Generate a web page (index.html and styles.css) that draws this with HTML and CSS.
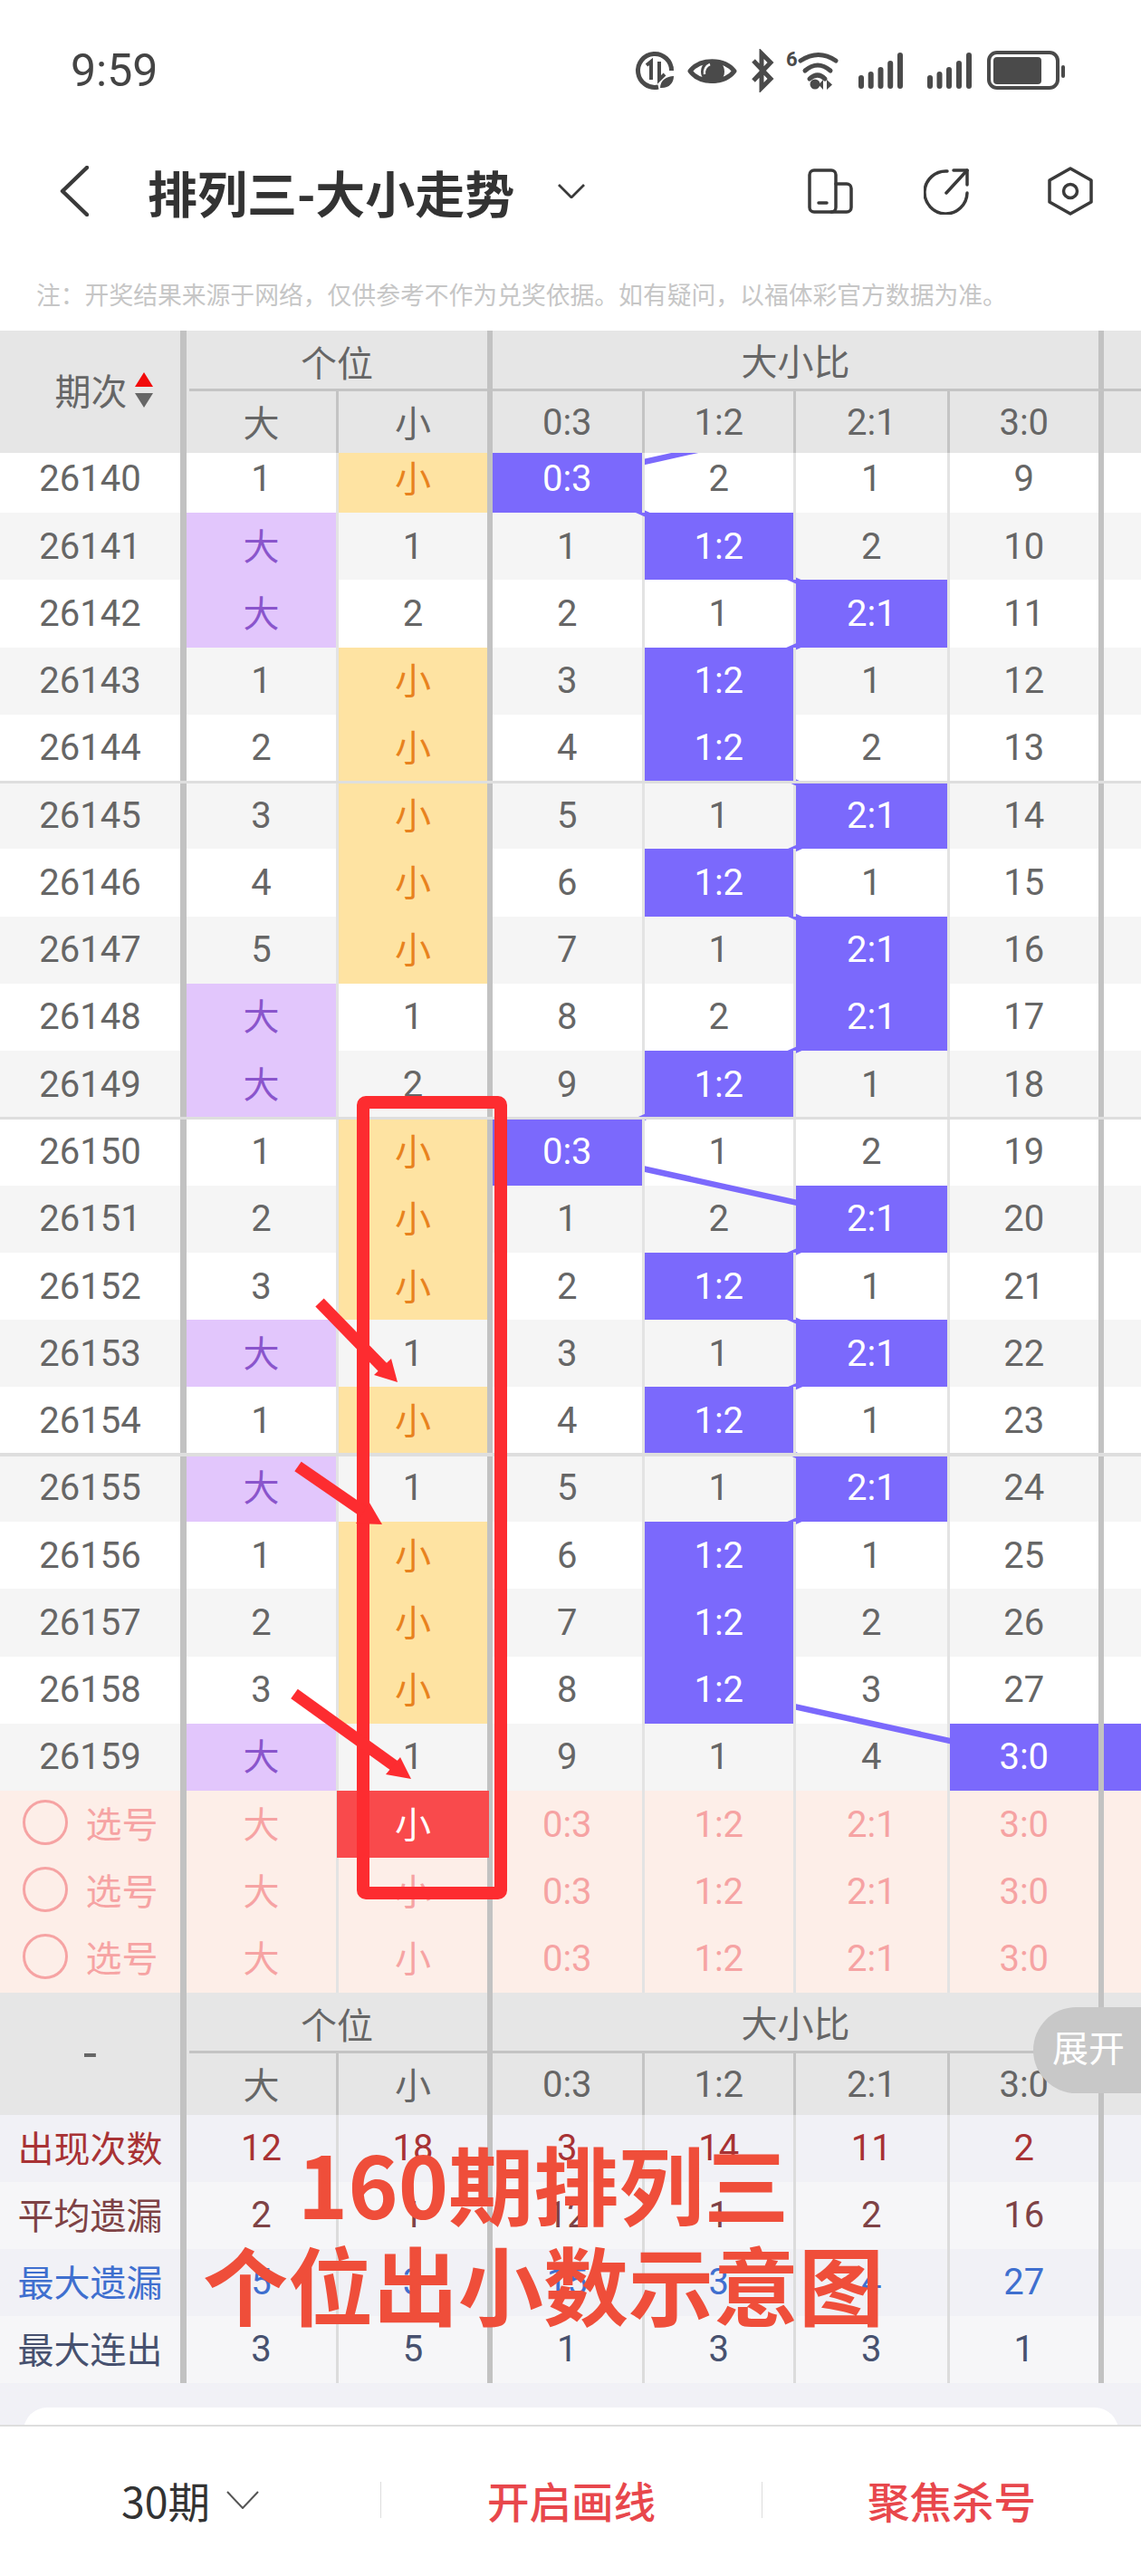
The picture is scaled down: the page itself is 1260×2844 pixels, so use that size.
FILE: index.html
```html
<!DOCTYPE html>
<html lang="zh-CN">
<head>
    <meta charset="utf-8">
    <title>排列三-大小走势</title>
    <link rel="stylesheet" href="styles.css">
</head>
<body>
<div class="page">

    <!-- status bar -->
    <div class="status">
        <span class="status-time">9:59</span>
        <svg class="status-icons" width="480" height="48" viewBox="700 54 480 48">
            <g fill="none" stroke="#4a4a4a" stroke-width="5">
                <path d="M741.5 78A18.5 18.5 0 1 0 727 96"/>
                <path stroke-width="4" d="M714 72l5-4v20M728 68v20l6-6"/>
                <path d="M762 78.5C773 64 800 64 811 78.5C800 93 773 93 762 78.5Z" stroke-linejoin="round"/>
                <path d="M832 67L851 87L841 97V59L851 69L832 89"/>
                <g stroke-linecap="round">
                    <path d="M884 67Q904 54 923 67"/>
                    <path d="M889 78Q903 66 917 78"/>
                    <path d="M894 87Q903 79 911 87"/>
                </g>
                <g stroke-width="6" stroke-linecap="round">
                    <path d="M951 95v-9M961.7 95v-13M972.5 95v-18M983.2 95v-25M994 95v-34"/>
                    <path d="M1027 95v-9M1037.5 95v-13M1048 95v-18M1059 95v-25M1070 95v-34"/>
                </g>
                <rect x="1092" y="58" width="76" height="39" rx="9" stroke-width="4"/>
            </g>
            <g fill="#4a4a4a">
                <path d="M729 97C729 89 736 84 744 84C744 92 738 98 729 97Z"/>
                <circle cx="787" cy="79" r="13"/>
                <circle cx="900" cy="93" r="5.5"/>
                <path d="M909 88v11l-5-5.500zM913 88v11l6-5.500z"/>
                <rect x="1097" y="63" width="53" height="30" rx="4"/>
                <rect x="1172" y="72" width="4" height="14" rx="2"/>
                <text class="status-six" x="868" y="73">6</text>
            </g>
            <path d="M778 82a10 10 0 0 1 6-11" fill="none" stroke="#fff" stroke-width="2.500"/>
        </svg>
    </div>

    <!-- nav -->
    <div class="nav">
        <svg class="nav-back" width="32" height="56" viewBox="0 0 32 56">
            <path d="M30 2L3 28L30 54" fill="none" stroke="#3a3a3a" stroke-width="4.500" stroke-linecap="round" stroke-linejoin="round"/>
        </svg>
        <span class="nav-title">排列三-大小走势</span>
        <svg class="nav-down" width="30" height="16" viewBox="0 0 30 16">
            <path d="M1 1L15 15L29 1" fill="none" stroke="#3a3a3a" stroke-width="2.800"/>
        </svg>
        <div class="nav-actions">
            <svg width="50" height="50" viewBox="0 0 50 50">
                <g fill="none" stroke="#3a3a3a" stroke-width="3.500" stroke-linejoin="round" stroke-linecap="round">
                    <rect x="2" y="2" width="29" height="46" rx="5"/>
                    <path d="M31 17h12a5 5 0 0 1 5 5v21a5 5 0 0 1-5 5H26"/>
                    <path d="M12 38h9"/>
                </g>
            </svg>
            <svg class="nav-share" width="50" height="52" viewBox="0 0 50 52">
                <g fill="none" stroke="#3a3a3a" stroke-width="3.500" stroke-linecap="round" stroke-linejoin="round">
                    <path d="M26 4A23.500 23.500 0 1 0 48 28"/>
                    <path d="M25 28L48 3"/>
                    <path d="M33 3h15v16"/>
                </g>
            </svg>
            <svg class="nav-hex" width="50" height="54" viewBox="0 0 50 54">
                <g fill="none" stroke="#3a3a3a" stroke-width="3.500" stroke-linejoin="round">
                    <path d="M25 2L48 15V39L25 52L2 39V15Z"/>
                    <circle cx="25" cy="27" r="7.500"/>
                </g>
            </svg>
        </div>
    </div>

    <p class="note">注：开奖结果来源于网络，仅供参考不作为兑奖依据。如有疑问，以福体彩官方数据为准。</p>

    <!-- table head -->
    <div class="thead">
        <div class="th-no th-sorted">期次<span class="sort"><i class="sort-up"></i><i class="sort-down"></i></span></div>
        <div class="th-group th-ones">个位</div>
        <div class="th-group th-ratio">大小比</div>
        <div class="th-group th-rest"></div>
        <div class="th-sub th-han">大</div>
        <div class="th-sub th-thick th-han">小</div>
        <div class="th-sub">0:3</div>
        <div class="th-sub">1:2</div>
        <div class="th-sub">2:1</div>
        <div class="th-sub th-thick">3:0</div>
        <div class="th-sub th-end"></div>
    </div>

    <!-- trend rows -->
    <div class="trend">
        <svg class="trend-line" width="1260" height="1700" viewBox="0 0 1260 1700">
            <polyline fill="none" stroke="#7b69fc" stroke-width="6.500" points="961,-45.400 626,28.900 793.500,103.100 961,177.400 793.500,251.700 793.500,326 961,400.200 793.500,474.500 961,548.800 961,623 793.500,697.300 626,771.600 961,845.800 793.500,920.100 961,994.400 793.500,1068.600 961,1142.900 793.500,1217.200 793.500,1291.500 793.500,1365.700 1130.500,1440"/>
        </svg>
        <div class="trend-rows">
            <div class="row cols"><div>26140</div><div>1</div><div class="small">小</div><div class="on">0:3</div><div>2</div><div>1</div><div>9</div><div></div></div>
            <div class="row cols alt"><div>26141</div><div class="big">大</div><div>1</div><div>1</div><div class="on">1:2</div><div>2</div><div>10</div><div></div></div>
            <div class="row cols"><div>26142</div><div class="big">大</div><div>2</div><div>2</div><div>1</div><div class="on">2:1</div><div>11</div><div></div></div>
            <div class="row cols alt"><div>26143</div><div>1</div><div class="small">小</div><div>3</div><div class="on">1:2</div><div>1</div><div>12</div><div></div></div>
            <div class="row cols"><div>26144</div><div>2</div><div class="small">小</div><div>4</div><div class="on">1:2</div><div>2</div><div>13</div><div></div></div>
            <div class="row cols alt split"><div>26145</div><div>3</div><div class="small">小</div><div>5</div><div>1</div><div class="on">2:1</div><div>14</div><div></div></div>
            <div class="row cols"><div>26146</div><div>4</div><div class="small">小</div><div>6</div><div class="on">1:2</div><div>1</div><div>15</div><div></div></div>
            <div class="row cols alt"><div>26147</div><div>5</div><div class="small">小</div><div>7</div><div>1</div><div class="on">2:1</div><div>16</div><div></div></div>
            <div class="row cols"><div>26148</div><div class="big">大</div><div>1</div><div>8</div><div>2</div><div class="on">2:1</div><div>17</div><div></div></div>
            <div class="row cols alt"><div>26149</div><div class="big">大</div><div>2</div><div>9</div><div class="on">1:2</div><div>1</div><div>18</div><div></div></div>
            <div class="row cols split"><div>26150</div><div>1</div><div class="small">小</div><div class="on">0:3</div><div>1</div><div>2</div><div>19</div><div></div></div>
            <div class="row cols alt"><div>26151</div><div>2</div><div class="small">小</div><div>1</div><div>2</div><div class="on">2:1</div><div>20</div><div></div></div>
            <div class="row cols"><div>26152</div><div>3</div><div class="small">小</div><div>2</div><div class="on">1:2</div><div>1</div><div>21</div><div></div></div>
            <div class="row cols alt"><div>26153</div><div class="big">大</div><div>1</div><div>3</div><div>1</div><div class="on">2:1</div><div>22</div><div></div></div>
            <div class="row cols"><div>26154</div><div>1</div><div class="small">小</div><div>4</div><div class="on">1:2</div><div>1</div><div>23</div><div></div></div>
            <div class="row cols alt split"><div>26155</div><div class="big">大</div><div>1</div><div>5</div><div>1</div><div class="on">2:1</div><div>24</div><div></div></div>
            <div class="row cols"><div>26156</div><div>1</div><div class="small">小</div><div>6</div><div class="on">1:2</div><div>1</div><div>25</div><div></div></div>
            <div class="row cols alt"><div>26157</div><div>2</div><div class="small">小</div><div>7</div><div class="on">1:2</div><div>2</div><div>26</div><div></div></div>
            <div class="row cols"><div>26158</div><div>3</div><div class="small">小</div><div>8</div><div class="on">1:2</div><div>3</div><div>27</div><div></div></div>
            <div class="row cols alt"><div>26159</div><div class="big">大</div><div>1</div><div>9</div><div>1</div><div>4</div><div class="on">3:0</div><div class="on"></div></div>
            <div class="row cols pick"><div><span class="pick-ring"></span>选号</div><div>大</div><div class="hit">小</div><div>0:3</div><div>1:2</div><div>2:1</div><div>3:0</div><div></div></div>
            <div class="row cols pick"><div><span class="pick-ring"></span>选号</div><div>大</div><div>小</div><div>0:3</div><div>1:2</div><div>2:1</div><div>3:0</div><div></div></div>
            <div class="row cols pick"><div><span class="pick-ring"></span>选号</div><div>大</div><div>小</div><div>0:3</div><div>1:2</div><div>2:1</div><div>3:0</div><div></div></div>
        </div>
    </div>

    <!-- same head again above the totals -->
    <div class="thead">
        <div class="th-no th-dash">-</div>
        <div class="th-group th-ones">个位</div>
        <div class="th-group th-ratio">大小比</div>
        <div class="th-group th-rest"></div>
        <div class="th-sub th-han">大</div>
        <div class="th-sub th-thick th-han">小</div>
        <div class="th-sub">0:3</div>
        <div class="th-sub">1:2</div>
        <div class="th-sub">2:1</div>
        <div class="th-sub th-thick">3:0</div>
        <div class="th-sub th-end"></div>
    </div>

    <div class="stats">
        <div class="stat cols stat-count"><div>出现次数</div><div>12</div><div>18</div><div>3</div><div>14</div><div>11</div><div>2</div><div></div></div>
        <div class="stat cols stat-avg"><div>平均遗漏</div><div>2</div><div>1</div><div>12</div><div>1</div><div>2</div><div>16</div><div></div></div>
        <div class="stat cols stat-miss"><div>最大遗漏</div><div>5</div><div>3</div><div>15</div><div>3</div><div>4</div><div>27</div><div></div></div>
        <div class="stat cols stat-run"><div>最大连出</div><div>3</div><div>5</div><div>1</div><div>3</div><div>3</div><div>1</div><div></div></div>
    </div>

    <div class="tail"><div class="tail-card"></div></div>

    <!-- bottom bar -->
    <div class="footer">
        <div class="footer-item footer-period">30期
            <svg width="36" height="20" viewBox="0 0 36 20">
                <path d="M1 1L18 19L35 1" fill="none" stroke="#555" stroke-width="2"/>
            </svg>
        </div>
        <div class="footer-item footer-red">开启画线</div>
        <div class="footer-item footer-red">聚焦杀号</div>
    </div>

    <div class="expand">展开</div>

    <!-- red marks someone drew over the screenshot -->
    <svg class="marks" width="1260" height="2844" viewBox="0 0 1260 2844">
        <rect x="401" y="1217" width="152" height="873" rx="3" fill="none" stroke="#fd2c30" stroke-width="14" stroke-linejoin="round"/>
        <g stroke="#fd2c30" stroke-width="13">
            <path d="M353 1438L424 1511"/>
            <path d="M329 1619L406 1672"/>
            <path d="M325 1870L439 1952"/>
        </g>
        <g fill="#fd2c30">
            <polygon points="439,1526 432,1500 413,1518"/>
            <polygon points="422,1683 408,1659 393,1682"/>
            <polygon points="454,1964 442,1940 426,1959"/>
        </g>
    </svg>

    <div class="promo">160期排列三<br>个位出小数示意图</div>
</div>
</body>
</html>
```

FILE: styles.css
```css
* {
    box-sizing: border-box;
}

body {
    margin: 0;
    padding: 0;
    font-family: Roboto, "Noto Sans CJK SC", sans-serif;
    background-color: #fff;
}

.page {
    position: relative;
    display: flex;
    flex-direction: column;
    width: 1260px;
    height: 2844px;
    overflow: hidden;
}

/* status bar */
.status {
    display: flex;
    align-items: center;
    justify-content: space-between;
    height: 156px;
    padding: 0 80px 0 78px;
}

.status-time {
    font-size: 50px;
    color: #444;
}

.status-icons {
    display: block;
}

.status-six {
    font-size: 22px;
    font-weight: 700;
}

/* nav */
.nav {
    display: flex;
    align-items: center;
    height: 110px;
    padding: 0 53px 0 66px;
}

.nav-title {
    margin-left: 65px;
    font-family: "Noto Sans CJK SC", sans-serif;
    font-size: 55px;
    font-weight: 700;
    line-height: 70px;
    color: #333;
}

.nav-down {
    margin-left: 48px;
}

.nav-actions {
    display: flex;
    align-items: center;
    margin-left: auto;
}

.nav-share {
    margin-left: 78px;
}

.nav-hex {
    margin-left: 87px;
}

.note {
    height: 99px;
    margin: 0;
    padding: 40px 0 0 40px;
    font-family: "Noto Sans CJK SC", sans-serif;
    font-size: 26.8px;
    line-height: 38px;
    color: #c6c6c6;
}

/* columns shared by head, rows and totals */
.cols,
.thead {
    display: grid;
    grid-template-columns: 206px 168px 170px 167.5px 167.5px 169.6px 170.4px 41px;
}

.cols > div {
    display: flex;
    align-items: center;
    justify-content: center;
    font-size: 40px;
    border-right: 3.5px solid #e3e3e3;
}

.cols > div:nth-child(1) {
    border-right: 7px solid #c2c2c2;
}

.cols > div:nth-child(3),
.cols > div:nth-child(7) {
    border-right: 6px solid #c2c2c2;
}

.cols > div:nth-child(8) {
    border-right: 0;
}

/* table head */
.thead {
    grid-template-rows: 67px 68px;
    background-color: #e6e6e6;
    color: #666;
    font-size: 40px;
}

.th-no {
    grid-row: 1 / 3;
    display: flex;
    align-items: center;
    justify-content: center;
    border-right: 7px solid #c2c2c2;
}

.th-sorted {
    padding: 0 0 5px 30px;
}

.th-dash {
    font-size: 54px;
    padding-bottom: 3px;
}

.th-group {
    display: flex;
    align-items: center;
    justify-content: center;
    height: 67px;
    border-bottom: 3px solid #c4c4c4;
    border-right: 6px solid #c2c2c2;
}

.th-ones {
    grid-column: 2 / 4;
    position: relative;
    border-bottom: 0;
}

.th-ones::after {
    content: "";
    position: absolute;
    left: 3px;
    right: 0;
    bottom: 0;
    height: 3px;
    background-color: #c4c4c4;
}

.th-ratio {
    grid-column: 4 / 8;
}

.th-rest {
    border-right: 0;
}

.th-sub {
    display: flex;
    align-items: center;
    justify-content: center;
    border-right: 3.5px solid #c4c4c4;
}

.th-han {
    padding-bottom: 3px;
}

.th-thick {
    border-right: 6px solid #c2c2c2;
}

.th-end {
    border-right: 0;
}

.sort {
    display: inline-flex;
    flex-direction: column;
    gap: 7px;
    margin-left: 8px;
}

.sort i {
    display: block;
    width: 0;
    height: 0;
    border-left: 10px solid transparent;
    border-right: 10px solid transparent;
}

.sort-up {
    border-bottom: 16px solid #f20a0a;
}

.sort-down {
    border-top: 16px solid #666;
}

/* trend rows */
.trend {
    position: relative;
    height: 1700px;
    overflow: hidden;
}

.trend-line {
    position: absolute;
    left: 0;
    top: 0;
    z-index: 1;
}

.trend-rows {
    margin-top: -8.27px;
}

.row {
    position: relative;
    height: 74.27px;
    background-color: #fff;
    color: #666;
}

.row.alt {
    background-color: #f5f5f5;
}

/* line every five issues */
.row.split::before {
    content: "";
    position: absolute;
    z-index: 3;
    left: 0;
    right: 0;
    top: -1.5px;
    height: 3.5px;
    background-color: #dedede;
}

.row .small {
    padding-bottom: 5px;
    background-color: #fee3a2;
    color: #e8821e;
}

.row .big {
    padding-bottom: 5px;
    background-color: #e2c6fc;
    color: #8a55cc;
}

.row .on {
    position: relative;
    z-index: 2;
    background-color: #7b69fc;
    color: #fff;
}

.row.pick {
    background-color: #fdeee8;
    color: #f6a3a3;
}

.row.pick > div:nth-child(-n+3) {
    padding-bottom: 5px;
}

.pick-ring {
    width: 50px;
    height: 50px;
    margin-right: 20px;
    border: 3px solid #f6a3a3;
    border-radius: 50%;
}

.row .hit {
    position: relative;
    z-index: 2;
    color: #fff;
}

.row .hit::before {
    content: "";
    position: absolute;
    z-index: -1;
    left: -2px;
    right: -2px;
    top: 0;
    bottom: 0;
    background-color: #f94a4c;
}

/* totals */
.stat {
    height: 73.9px;
}

.stat > div:nth-child(1) {
    padding-bottom: 3px;
}

.stat > div:nth-child(2),
.stat > div:nth-child(4),
.stat > div:nth-child(5),
.stat > div:nth-child(6) {
    border-right-color: #dcdcdc;
}

.stat-count {
    background-color: #f1f1f6;
    color: #a83234;
}

.stat-avg {
    background-color: #f6f6f8;
    color: #7e4245;
}

.stat-miss {
    background-color: #f1f1f6;
    color: #3f6fcf;
}

.stat-run {
    background-color: #f6f6f8;
    color: #47516f;
}

.tail {
    flex: 1;
    padding: 27px 25px 0 26px;
    overflow: hidden;
    background-color: #f1f1f6;
}

.tail-card {
    height: 60px;
    border-radius: 26px 26px 0 0;
    background-color: #fff;
}

/* bottom bar */
.footer {
    display: grid;
    grid-template-columns: 421px 421px 418px;
    align-items: center;
    height: 167px;
    border-top: 2px solid #ddd;
    background-color: #fff;
    font-family: "Noto Sans CJK SC", sans-serif;
    font-size: 46.5px;
    font-weight: 500;
}

.footer-item {
    display: flex;
    align-items: center;
    justify-content: center;
    height: 40px;
    border-right: 1px solid #ddd;
    position: relative;
    top: -2px;
}

.footer-item:last-child {
    border-right: 0;
}

.footer-period {
    gap: 18px;
    color: #333;
    font-weight: 400;
}

.footer-red {
    color: #e8474c;
}

/* things lying over the table */
.expand {
    position: absolute;
    right: 0;
    top: 2216px;
    width: 119px;
    height: 95px;
    padding-left: 21px;
    border-radius: 48px 0 0 48px;
    background-color: #c8c8c8;
    color: #fff;
    font-size: 40px;
    line-height: 93px;
}

.marks {
    position: absolute;
    left: 0;
    top: 0;
    z-index: 5;
}

.promo {
    position: absolute;
    left: 0;
    top: 2354px;
    z-index: 6;
    width: 1200px;
    text-align: center;
    font-family: "Noto Sans CJK SC", sans-serif;
    font-size: 94px;
    font-weight: 700;
    line-height: 111px;
    color: #ef4e3a;
}
```
